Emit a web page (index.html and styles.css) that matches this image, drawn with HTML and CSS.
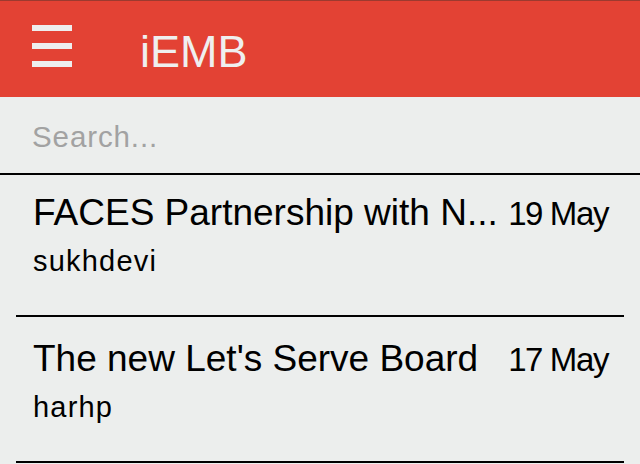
FILE: index.html
```html
<!DOCTYPE html>
<html lang="en">
<head>
<meta charset="utf-8">
<title>iEMB</title>
<link rel="stylesheet" href="styles.css">
</head>
<body>
<div class="app">
  <header class="navbar">
    <div class="menu-icon" aria-label="Menu">
      <span class="bar"></span>
      <span class="bar"></span>
      <span class="bar"></span>
    </div>
    <div class="nav-title">iEMB</div>
  </header>
  <div class="search">
    <div class="search-placeholder">Search...</div>
  </div>
  <ul class="list">
    <li class="row">
      <div class="row-top">
        <span class="row-title">FACES Partnership with N...</span>
        <span class="row-date">19 May</span>
      </div>
      <div class="row-author">sukhdevi</div>
    </li>
    <li class="row">
      <div class="row-top">
        <span class="row-title">The new Let's Serve Board</span>
        <span class="row-date">17 May</span>
      </div>
      <div class="row-author">harhp</div>
    </li>
  </ul>
</div>
</body>
</html>
```

FILE: styles.css
```css
* {
  box-sizing: border-box;
}

html, body {
  margin: 0;
  padding: 0;
}

body {
  background: #eceeed;
  font-family: "Liberation Sans", Arial, Helvetica, sans-serif;
  color: #000;
  overflow: hidden;
}

.app {
  width: 640px;
  height: 464px;
  overflow: hidden;
  background: #eceeed;
}

.navbar {
  height: 97px;
  background: #e34234;
  border-top: 1px solid #9c3a2f;
  display: flex;
  align-items: flex-start;
  padding: 24px 0 0 32px;
}

.menu-icon {
  width: 40px;
  height: 42px;
  display: flex;
  flex-direction: column;
  justify-content: space-between;
  flex-shrink: 0;
}

.bar {
  display: block;
  height: 6px;
  background: #eeeeee;
}

.nav-title {
  margin-left: 68px;
  font-size: 45px;
  line-height: 54px;
  color: #efefef;
}

.search {
  height: 78px;
  padding: 22px 0 0 32px;
  border-bottom: 2px solid #000;
}

.search-placeholder {
  font-size: 29.5px;
  line-height: 36px;
  letter-spacing: 0.9px;
  color: #a2a2a2;
}

.list {
  list-style: none;
  margin: 0;
  padding: 0;
}

.row {
  margin: 0 16px;
  padding: 20px 16px 38px 17px;
  border-bottom: 2px solid #000;
}

.row:first-child {
  padding-top: 16px;
}

.row-top {
  display: flex;
  align-items: baseline;
  gap: 8px;
  height: 44px;
}

.row-title {
  flex: 1 1 auto;
  min-width: 0;
  font-size: 37px;
  line-height: 44px;
  white-space: nowrap;
  overflow: hidden;
}

.row-date {
  flex-shrink: 0;
  font-size: 33px;
  line-height: 44px;
  letter-spacing: -1.4px;
}

.row-author {
  margin-top: 10px;
  font-size: 29px;
  line-height: 32px;
  letter-spacing: 1.2px;
}
```
